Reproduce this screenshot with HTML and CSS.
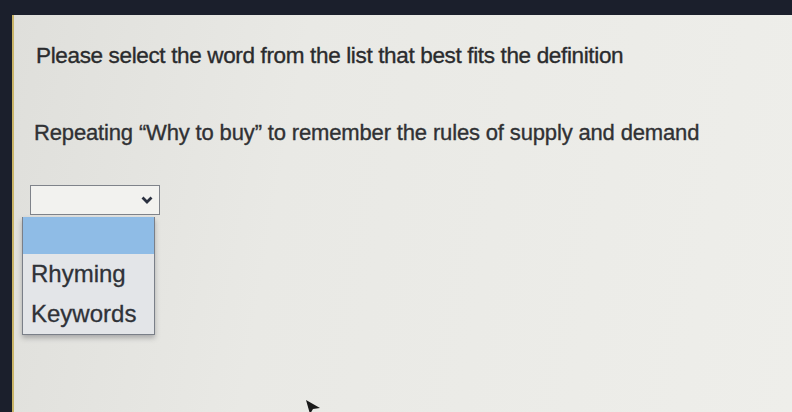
FILE: index.html
```html
<!DOCTYPE html>
<html>
<head>
<meta charset="utf-8">
<link rel="stylesheet" href="styles.css">
</head>
<body>
<div class="screen">
  <div class="panel">
    <p class="prompt">Please select the word from the list that best fits the definition</p>
    <p class="definition">Repeating “Why to buy” to remember the rules of supply and demand</p>
    <div class="dropdown">
      <div class="select">
        <svg class="chev" width="12" height="8" viewBox="0 0 12 8"><path d="M1.5 1.5 L6 6 L10.5 1.5" fill="none" stroke="#2b3140" stroke-width="2.8"/></svg>
      </div>
      <ul class="menu">
        <li class="opt blank"></li>
        <li class="opt">Rhyming</li>
        <li class="opt">Keywords</li>
      </ul>
    </div>
    <svg class="cursor" width="18" height="14" viewBox="0 0 18 14"><path d="M2 0 L16 8 L9 9 L6 14 Z" fill="#1a1a1a"/></svg>
  </div>
</div>
</body>
</html>
```
FILE: styles.css
```css
html, body {
  margin: 0;
  padding: 0;
  background: #1b1f2c;
  width: 792px;
  height: 412px;
  overflow: hidden;
}
.screen {
  padding: 15px 0 0 12px;
  height: 397px;
}
.panel {
  position: relative;
  height: 100%;
  background: linear-gradient(100deg, #dfdfdb 0%, #e9e9e5 35%, #eeeeea 100%);
  border-left: 2px solid #c9b468;
  font-family: "Liberation Sans", Arial, sans-serif;
  color: #2a2b2d;
  padding: 0 0 0 22px;
  box-sizing: border-box;
}
.prompt {
  margin: 0;
  padding-top: 28px;
  font-size: 22.5px;
  letter-spacing: -0.35px;
  line-height: 26px;
  -webkit-text-stroke: 0.35px #2a2b2d;
}
.definition {
  margin: 51px 0 0 -2px;
  font-size: 22px;
  letter-spacing: -0.15px;
  line-height: 26px;
  color: #303134;
  -webkit-text-stroke: 0.35px #303134;
}
.dropdown {
  margin: 39px 0 0 -14px;
  width: 140px;
}
.select {
  margin-left: 8px;
  width: 130px;
  height: 30px;
  border: 1px solid #7f838a;
  background: #f2f2ef;
  display: flex;
  align-items: center;
  justify-content: flex-end;
  padding-right: 6px;
  box-sizing: border-box;
}
.chev { display: block; }
.menu {
  list-style: none;
  margin: 2px 0 0 0;
  padding: 0;
  width: 133px;
  border: 1px solid #7a7f88;
  border-top: none;
  background: #e3e5e8;
  box-shadow: 0 3px 5px rgba(60,60,70,0.35);
  box-sizing: border-box;
}
.opt {
  height: 40px;
  line-height: 40px;
  padding-left: 8px;
  font-size: 24px;
  color: #2f3238;
  -webkit-text-stroke: 0.3px #2f3238;
}
.opt.blank {
  height: 37px;
  background: #8fbce6;
}
.cursor {
  position: absolute;
  left: 290px;
  top: 385px;
}
```
